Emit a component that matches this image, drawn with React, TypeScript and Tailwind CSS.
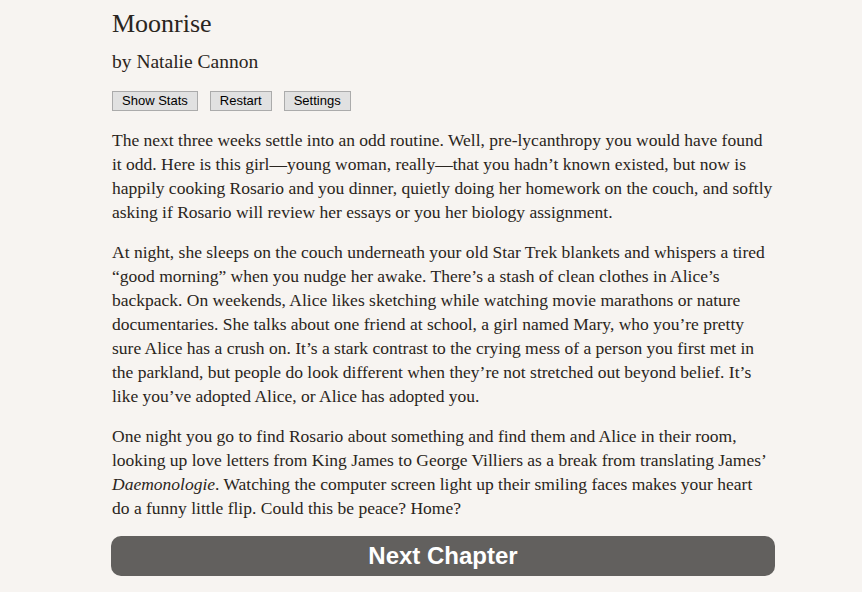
import React from "react";

const paragraphs: React.ReactNode[][] = [
  [
    "The next three weeks settle into an odd routine. Well, pre-lycanthropy you would have found",
    "it odd. Here is this girl\u2014young woman, really\u2014that you hadn\u2019t known existed, but now is",
    "happily cooking Rosario and you dinner, quietly doing her homework on the couch, and softly",
    "asking if Rosario will review her essays or you her biology assignment.",
  ],
  [
    "At night, she sleeps on the couch underneath your old Star Trek blankets and whispers a tired",
    "\u201cgood morning\u201d when you nudge her awake. There\u2019s a stash of clean clothes in Alice\u2019s",
    "backpack. On weekends, Alice likes sketching while watching movie marathons or nature",
    "documentaries. She talks about one friend at school, a girl named Mary, who you\u2019re pretty",
    "sure Alice has a crush on. It\u2019s a stark contrast to the crying mess of a person you first met in",
    "the parkland, but people do look different when they\u2019re not stretched out beyond belief. It\u2019s",
    "like you\u2019ve adopted Alice, or Alice has adopted you.",
  ],
  [
    "One night you go to find Rosario about something and find them and Alice in their room,",
    "looking up love letters from King James to George Villiers as a break from translating James\u2019",
    <>
      <em>Daemonologie</em>. Watching the computer screen light up their smiling faces makes your heart
    </>,
    "do a funny little flip. Could this be peace? Home?",
  ],
];

export default function App() {
  return (
    <div className="min-h-[592px] w-full bg-[#f7f4f1] text-[#2a2520]">
      <div className="ml-[111px] w-[664px] pt-[8px] font-['Liberation_Serif',serif]">
        <h1 className="pl-px text-[26px] leading-[32px] font-normal">Moonrise</h1>
        <h2 className="mt-[10px] pl-px text-[19.5px] leading-[24px] font-normal">by Natalie Cannon</h2>
        <div className="mt-[17px] flex gap-[12px] pl-px font-['Liberation_Sans',sans-serif]">
          {["Show Stats", "Restart", "Settings"].map((label) => (
            <button
              key={label}
              className="h-[20px] border border-[#ababab] bg-[#e1e1e1] px-[9px] text-[13px] leading-[18px] text-black"
            >
              {label}
            </button>
          ))}
        </div>
        <div className="mt-[17px] pl-px">
          {paragraphs.map((lines, i) => (
            <p key={i} className="mb-[16px] whitespace-nowrap text-[17.5px] leading-[24px]">
              {lines.map((line, j) => (
                <React.Fragment key={j}>
                  {line}
                  {j < lines.length - 1 && <br />}
                </React.Fragment>
              ))}
            </p>
          ))}
        </div>
        <button className="h-[40px] w-[664px] rounded-[10px] bg-[#62605e] font-['Liberation_Sans',sans-serif] text-[24px] font-bold text-white">
          Next Chapter
        </button>
      </div>
    </div>
  );
}
